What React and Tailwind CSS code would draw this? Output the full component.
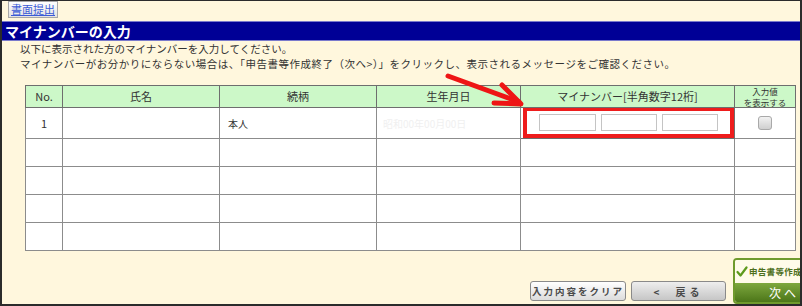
const font = { fontFamily: '"Noto Sans CJK JP", "Noto Sans", sans-serif' };

const cols = [
  { label: 'No.', w: 'w-[37px]' },
  { label: '氏名', w: 'w-[157px]' },
  { label: '続柄', w: 'w-[157px]' },
  { label: '生年月日', w: 'w-[144px]' },
  { label: 'マイナンバー[半角数字12桁]', w: 'w-[214px]' },
  { label: null, w: 'w-[61px]' },
];

function NumberInputs() {
  return (
    <div className="ml-[2px] h-[31px] -mt-px border-4 border-[#ee1c1c] flex items-center justify-center gap-[5px]">
      <div className="w-[57px] h-[17px] bg-white border border-[#c4c4c4]" />
      <div className="w-[56px] h-[17px] bg-white border border-[#c4c4c4]" />
      <div className="w-[56px] h-[17px] bg-white border border-[#c4c4c4]" />
    </div>
  );
}

export default function App() {
  const emptyRows = [0, 1, 2, 3];

  return (
    <div
      className="relative w-[802px] h-[306px] overflow-hidden bg-[#fff7dd] border-l-2 border-t border-r-2 border-b-2 border-[#2b2b2b] text-[#333]"
      style={font}
    >
      {/* top link button */}
      <div className="h-[20px] pl-[6px]">
        <div className="w-fit h-[17px] px-[2px] border border-[#a8a8a8] bg-gradient-to-b from-white to-[#e2e2e2] text-[11px] leading-[15px] text-[#3b5bd6] underline">
          書面提出
        </div>
      </div>

      {/* title */}
      <div className="h-[20px] bg-[#000096] border-t border-b border-[#7a7acc] flex items-center pl-[3px]">
        <span className="text-white font-bold text-[14px] leading-none">マイナンバーの入力</span>
      </div>

      {/* intro */}
      <div className="pl-[18px] text-[10.5px] leading-[15px] text-[#333] whitespace-nowrap">
        <p>以下に表示された方のマイナンバーを入力してください。</p>
        <p className="tracking-[0.5px]">マイナンバーがお分かりにならない場合は、「申告書等作成終了（次へ&gt;）」をクリックし、表示されるメッセージをご確認ください。</p>
      </div>

      {/* table */}
      <table className="ml-[23px] mt-[14px] border-collapse table-fixed text-[11px] bg-white">
        <thead>
          <tr className="h-[22px] bg-[#ccf8c8]">
            {cols.map((c, i) => (
              <th key={i} className={`${c.w} p-0 font-normal border border-[#6e6e6e] text-center`}>
                {c.label ?? (
                  <div className="text-[8.5px] leading-[10.5px]">
                    <div>入力値</div>
                    <div>を表示する</div>
                  </div>
                )}
              </th>
            ))}
          </tr>
        </thead>
        <tbody>
          <tr className="h-[30px]">
            <td className="p-0 border border-[#8c8c8c] text-center text-[#333]">1</td>
            <td className="p-0 border border-[#8c8c8c]" />
            <td className="p-0 pl-[8px] border border-[#8c8c8c] text-[10px]">本人</td>
            <td className="p-0 pl-[6px] border border-[#8c8c8c] text-[10px] text-[#f0f0f0]">昭和00年00月00日</td>
            <td className="p-0 border border-[#6e6e6e] align-top">
              <NumberInputs />
            </td>
            <td className="p-0 border border-[#8c8c8c]">
              <div className="mx-auto w-[14px] h-[14px] rounded-[3px] border border-[#a9a9a9] bg-gradient-to-b from-[#f2f2f2] to-[#cfcfcf]" />
            </td>
          </tr>
          {emptyRows.map((r) => (
            <tr key={r} className="h-[28px]">
              {cols.map((c, i) => (
                <td key={i} className="p-0 border border-[#8c8c8c]" />
              ))}
            </tr>
          ))}
        </tbody>
      </table>

      {/* buttons */}
      <div className="mt-[7px] pl-[528px] flex items-end gap-[5px] whitespace-nowrap">
        <div className="shrink-0 mb-[3px] w-[96px] h-[20px] rounded-[3px] border border-[#8a8a8a] bg-gradient-to-b from-white to-[#dcdcdc] flex items-center justify-center text-[9.5px] font-bold tracking-[2px] text-[#4a4a4a]">
          入力内容をクリア
        </div>
        <div className="shrink-0 mb-[3px] w-[95px] h-[20px] rounded-[3px] border border-[#8a8a8a] bg-gradient-to-b from-[#eeeeee] to-[#c6c6c6] flex items-center justify-center gap-[16px] text-[10px] font-bold text-[#4a4a4a]">
          <span>&lt;</span>
          <span className="tracking-[4px]">戻る</span>
        </div>
        <div className="shrink-0 ml-[2px] w-[90px] h-[46px] rounded-[4px] border-2 border-[#6f9a2c] overflow-hidden flex flex-col">
          <div className="h-[23px] bg-[#fffbe9] flex items-center pl-[1px] gap-[1px] text-[8.5px] font-bold tracking-[0.3px] text-[#4d6f1c]">
            <svg width="12" height="11" viewBox="0 0 12 11" className="shrink-0">
              <path d="M1.5 6 L4.5 9.5 L10.5 1.5" fill="none" stroke="#5d9a1d" strokeWidth="2.2" strokeLinecap="round" strokeLinejoin="round" />
            </svg>
            申告書等作成終了
          </div>
          <div className="flex-1 bg-gradient-to-b from-[#7ea83e] to-[#4c7618] text-white text-[12px] pl-[34px] tracking-[3px] flex items-center">
            次へ
          </div>
        </div>
      </div>

      {/* annotation arrow */}
      <svg className="absolute left-0 top-0 pointer-events-none" width="800" height="305">
        <g stroke="#ee1515" strokeWidth="5" strokeLinecap="round" strokeLinejoin="round" fill="none">
          <line x1="446" y1="75" x2="517" y2="101" />
          <polyline points="492,102 519,103 500,84" />
        </g>
      </svg>
    </div>
  );
}
